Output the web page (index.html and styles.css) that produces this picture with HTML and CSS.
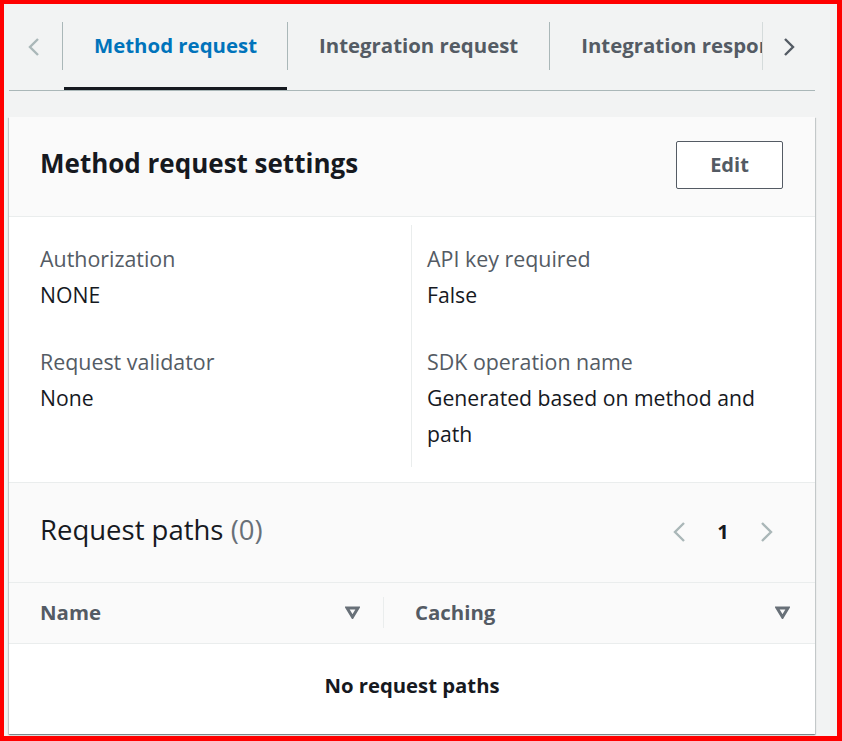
FILE: index.html
```html
<!DOCTYPE html>
<html lang="en">
<head>
<meta charset="utf-8">
<title>Method request</title>
<link rel="stylesheet" href="styles.css">
</head>
<body>
<div class="frame">
  <div class="tabs">
    <div class="tab-arrow tab-arrow-left">
      <svg width="14" height="20" viewBox="0 0 14 20"><path d="M11 2 L3 10 L11 18" fill="none" stroke="#aab7b8" stroke-width="2.4" stroke-linejoin="miter"/></svg>
    </div>
    <span class="sep"></span>
    <div class="tab-scroll">
      <div class="tab active"><span>Method request</span></div>
      <span class="sep"></span>
      <div class="tab"><span>Integration request</span></div>
      <span class="sep"></span>
      <div class="tab"><span>Integration response</span></div>
    </div>
    <span class="sep sep-fade"></span>
    <div class="tab-arrow tab-arrow-right">
      <svg width="14" height="20" viewBox="0 0 14 20"><path d="M3 2 L11 10 L3 18" fill="none" stroke="#545b64" stroke-width="2.4" stroke-linejoin="miter"/></svg>
    </div>
  </div>

  <div class="card">
    <div class="card-header">
      <h2 class="card-title">Method request settings</h2>
      <button class="btn">Edit</button>
    </div>
    <div class="kv">
      <div class="kv-col">
        <div class="kv-item">
          <div class="kv-label">Authorization</div>
          <div class="kv-value">NONE</div>
        </div>
        <div class="kv-item">
          <div class="kv-label">Request validator</div>
          <div class="kv-value">None</div>
        </div>
      </div>
      <div class="kv-col kv-col-right">
        <div class="kv-item">
          <div class="kv-label">API key required</div>
          <div class="kv-value">False</div>
        </div>
        <div class="kv-item">
          <div class="kv-label">SDK operation name</div>
          <div class="kv-value">Generated based on method and path</div>
        </div>
      </div>
    </div>
    <div class="section-header">
      <h2 class="section-title">Request paths <span class="count">(0)</span></h2>
      <div class="pager">
        <svg width="14" height="22" viewBox="0 0 14 22"><path d="M12 2 L3 11 L12 20" fill="none" stroke="#aab7b8" stroke-width="2.4"/></svg>
        <span class="page">1</span>
        <svg width="14" height="22" viewBox="0 0 14 22"><path d="M2 2 L11 11 L2 20" fill="none" stroke="#aab7b8" stroke-width="2.4"/></svg>
      </div>
    </div>
    <div class="table-head">
      <div class="th th-name">
        <span>Name</span>
        <svg class="sort" width="15" height="13" viewBox="0 0 15 13"><path d="M2 2 H13 L7.5 11 Z" fill="none" stroke="#687078" stroke-width="3" stroke-linejoin="miter"/></svg>
      </div>
      <span class="th-sep"></span>
      <div class="th th-caching">
        <span>Caching</span>
        <svg class="sort" width="15" height="13" viewBox="0 0 15 13"><path d="M2 2 H13 L7.5 11 Z" fill="none" stroke="#687078" stroke-width="3" stroke-linejoin="miter"/></svg>
      </div>
    </div>
    <div class="empty">No request paths</div>
  </div>
</div>
</body>
</html>
```

FILE: styles.css
```css
* { box-sizing: border-box; }

html, body {
  margin: 0;
  padding: 0;
}

body {
  font-family: "Open Sans", "Noto Sans", "Liberation Sans", sans-serif;
  color: #16191f;
}

.frame {
  width: 842px;
  height: 741px;
  border-style: solid;
  border-color: #ff0000;
  border-width: 4px 5px 5px 4px;
  background: #f2f3f3;
  overflow: hidden;
}

/* Tabs */
.tabs {
  display: flex;
  height: 87px;
  margin: 0 22px 0 5px;
  border-bottom: 1px solid #aab7b8;
}

.tab-arrow {
  width: 53px;
  display: flex;
  align-items: center;
  justify-content: center;
  padding-bottom: 42px;
  padding-top: 42px;
}

.tab-arrow-left { padding-right: 4px; }
.tab-arrow-right { width: 52px; padding-right: 0; }

.sep {
  flex: none;
  width: 1px;
  height: 48px;
  margin-top: 18px;
  background: #aab7b8;
}

.sep-fade { background: #d5dbdb; }

.tab-scroll {
  flex: 1;
  display: flex;
  overflow: hidden;
}

.tab {
  flex: none;
  display: flex;
  align-items: flex-start;
  padding: 0 31px;
  height: 86px;
  border-bottom: 3px solid transparent;
  font-weight: 700;
  font-size: 20.4px;
  color: #545b64;
  white-space: nowrap;
}

.tab span {
  line-height: 28px;
  margin-top: 27px;
}

.tab.active {
  margin-left: 1px;
  padding-left: 30px;
  padding-right: 30px;
  color: #0073bb;
  border-bottom-color: #16191f;
}

/* Card */
.card {
  margin: 26px 22px 0 5px;
  background: #ffffff;
  box-shadow: 0 1px 1px 0 rgba(0, 28, 36, 0.3), 1px 1px 1px 0 rgba(0, 28, 36, 0.15), -1px 1px 1px 0 rgba(0, 28, 36, 0.15);
}

.card-header {
  display: flex;
  align-items: center;
  justify-content: space-between;
  height: 100px;
  padding: 0 32px 2px 31px;
  background: #fafafa;
  border-bottom: 1px solid #eaeded;
}

.card-title {
  margin: 0 0 5px 0;
  font-size: 26px;
  font-weight: 700;
  line-height: 34px;
  color: #16191f;
}

.btn {
  width: 107px;
  height: 48px;
  border: 1px solid #545b64;
  border-radius: 2px;
  background: #ffffff;
  font-family: inherit;
  font-size: 20px;
  font-weight: 700;
  color: #545b64;
  padding: 0;
  margin-top: -2px;
}

/* Key value */
.kv {
  display: grid;
  grid-template-columns: 371px 1fr;
  padding: 8px 31px 15px 31px;
}

.kv-col {
  display: flex;
  flex-direction: column;
  gap: 30px;
  padding: 15px 0 15px 0;
}

.kv-col-right {
  border-left: 1px solid #eaeded;
  padding-left: 15px;
}

.kv-label {
  font-size: 21.4px;
  line-height: 37px;
  color: #545b64;
}

.kv-value {
  font-size: 21.2px;
  line-height: 36px;
  color: #16191f;
  padding-right: 20px;
}

/* Section header */
.section-header {
  display: flex;
  align-items: center;
  justify-content: space-between;
  height: 101px;
  padding: 0 41px 6px 31px;
  background: #fafafa;
  border-top: 1px solid #eaeded;
  border-bottom: 1px solid #eaeded;
}

.section-title {
  margin: 0;
  font-size: 27.5px;
  font-weight: 400;
  line-height: 36px;
  color: #16191f;
}

.count { color: #687078; }

.pager {
  display: flex;
  align-items: center;
  margin-top: 4px;
}

.page {
  font-weight: 700;
  font-size: 20px;
  width: 74px;
  text-align: center;
  color: #16191f;
}

/* Table */
.table-head {
  display: flex;
  align-items: center;
  height: 61px;
  background: #fafafa;
  border-bottom: 1px solid #eaeded;
  padding: 0 25px 2px 31px;
}

.th {
  display: flex;
  align-items: center;
  justify-content: space-between;
  font-size: 20.4px;
  font-weight: 700;
  color: #545b64;
}

.th-name {
  width: 320px;
}

.th-sep {
  width: 1px;
  height: 31px;
  background: #eaeded;
  margin: 0 31px 0 23px;
}

.th-caching {
  flex: 1;
}

.empty {
  height: 90px;
  display: flex;
  justify-content: center;
  padding-top: 27px;
  font-size: 20.3px;
  font-weight: 700;
  color: #16191f;
}
```
